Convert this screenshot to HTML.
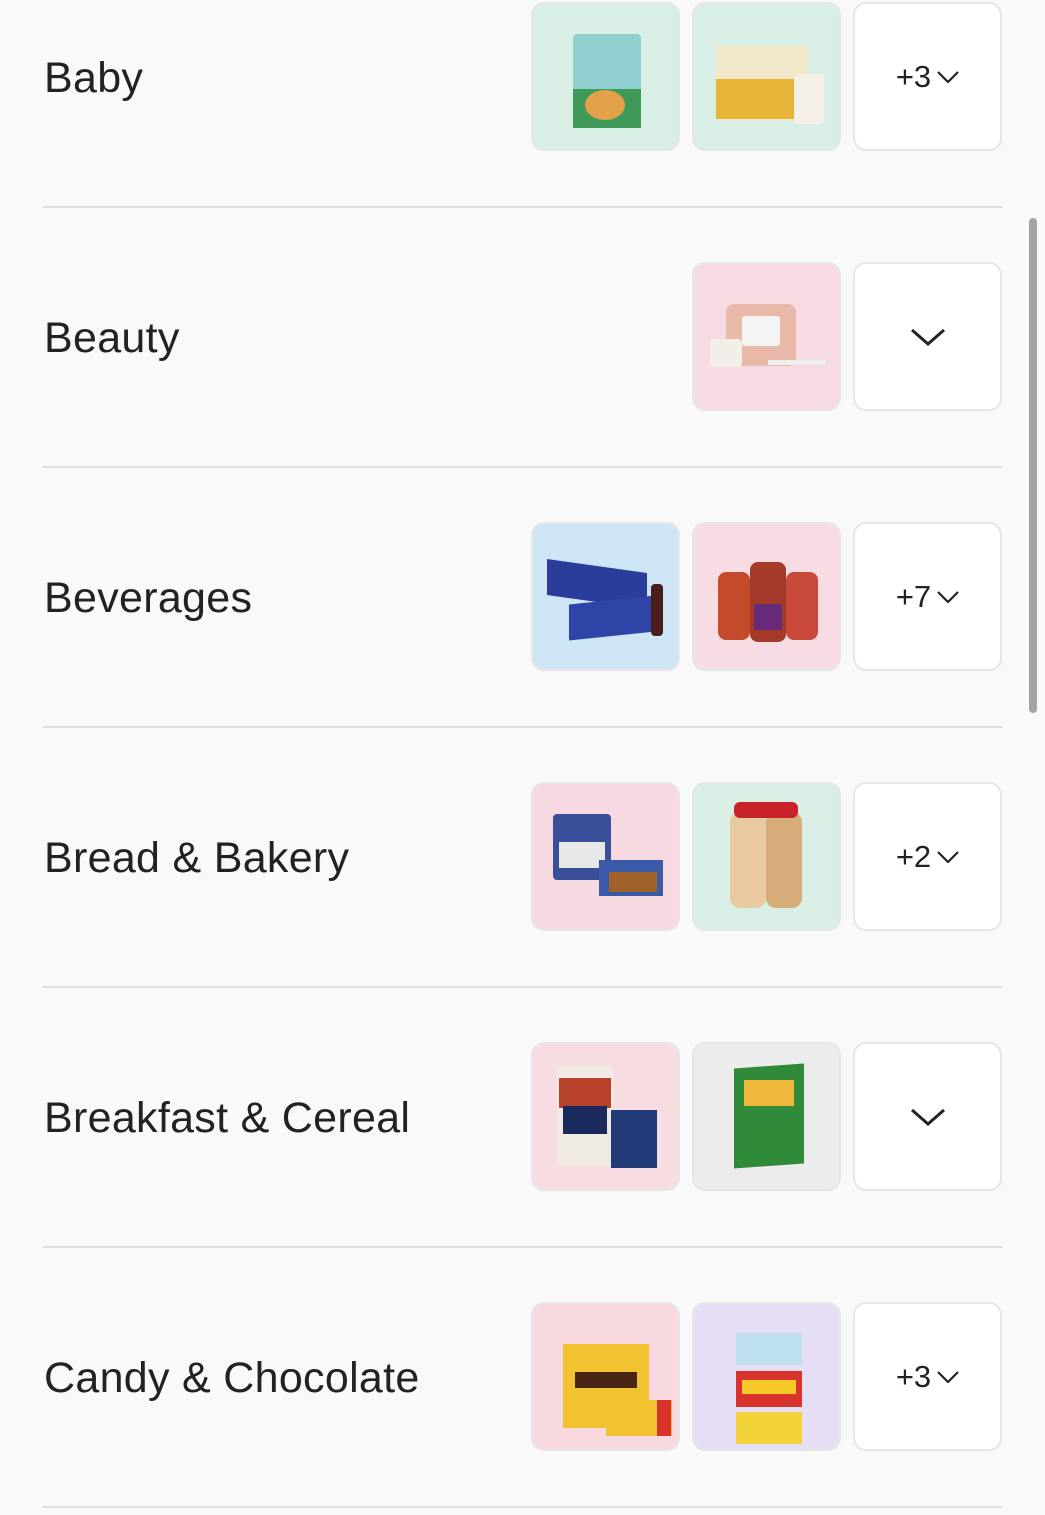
<!DOCTYPE html>
<html><head><meta charset="utf-8"><style>
*{margin:0;padding:0;box-sizing:border-box}
body{width:1045px;height:1515px;background:#f9f9f9;position:relative;overflow:hidden;font-family:"Liberation Sans",Arial,sans-serif;color:#222}
.lbl{position:absolute;left:44px;font-size:43px;line-height:50px;letter-spacing:0.3px}
.div{position:absolute;left:43px;width:959px;height:2px;background:#dedede}
.t{position:absolute;width:149px;height:149px;border-radius:13px;border:2px solid #e6e6e6;overflow:hidden}
.more{background:#fff;display:flex;align-items:center;justify-content:center;font-size:31px;color:#222}
.more svg{margin-left:6px}
.p{position:absolute}
.sb{position:absolute;left:1029px;top:218px;width:8px;height:495px;border-radius:4px;background:#a3a3a3}
</style></head><body>
<div class="sb"></div>

<!-- Row 1 Baby -->
<div class="lbl" style="top:53px">Baby</div>
<div class="t" style="left:531px;top:2px;background:#d9efe6">
 <div class="p" style="left:40px;top:30px;width:68px;height:94px;background:#8fcfd0;border-radius:4px"></div>
 <div class="p" style="left:40px;top:85px;width:68px;height:39px;background:#3f9a5a"></div>
 <div class="p" style="left:52px;top:86px;width:40px;height:30px;background:#e3a04a;border-radius:50%"></div>
</div>
<div class="t" style="left:692px;top:2px;background:#d9efe6">
 <div class="p" style="left:22px;top:42px;width:92px;height:74px;background:#f0e8c8"></div>
 <div class="p" style="left:22px;top:75px;width:92px;height:40px;background:#e8b437"></div>
 <div class="p" style="left:100px;top:70px;width:30px;height:50px;background:#f4f0e6;border-radius:4px"></div>
</div>
<div class="t more" style="left:853px;top:2px">+3<svg width="22" height="12" viewBox="0 0 22 12"><path d="M1 1L11 11L21 1" fill="none" stroke="#222" stroke-width="2.2"/></svg></div>
<div class="div" style="top:206px"></div>

<!-- Row 2 Beauty -->
<div class="lbl" style="top:313px">Beauty</div>
<div class="t" style="left:692px;top:262px;background:#f7dbe2">
 <div class="p" style="left:32px;top:40px;width:70px;height:62px;background:#e8b8a8;border-radius:8px"></div>
 <div class="p" style="left:48px;top:52px;width:38px;height:30px;background:#f4f4f4;border-radius:3px"></div>
 <div class="p" style="left:16px;top:75px;width:32px;height:28px;background:#f2efe8;border-radius:4px"></div>
 <div class="p" style="left:74px;top:96px;width:58px;height:5px;background:#eee"></div>
</div>
<div class="t more" style="left:853px;top:262px"><svg width="36" height="18" viewBox="0 0 36 18" style="margin:0"><path d="M2 2L18 16L34 2" fill="none" stroke="#222" stroke-width="3"/></svg></div>
<div class="div" style="top:466px"></div>

<!-- Row 3 Beverages -->
<div class="lbl" style="top:573px">Beverages</div>
<div class="t" style="left:531px;top:522px;background:#cde5f5">
 <div class="p" style="left:14px;top:42px;width:100px;height:36px;background:#2a3d9a;transform:skewY(8deg)"></div>
 <div class="p" style="left:36px;top:76px;width:86px;height:36px;background:#2e44a6;transform:skewY(-6deg)"></div>
 <div class="p" style="left:118px;top:60px;width:12px;height:52px;background:#4a1e1a;border-radius:4px"></div>
</div>
<div class="t" style="left:692px;top:522px;background:#f7dde3">
 <div class="p" style="left:24px;top:48px;width:32px;height:68px;background:#c44a2c;border-radius:8px"></div>
 <div class="p" style="left:92px;top:48px;width:32px;height:68px;background:#c94a3a;border-radius:8px"></div>
 <div class="p" style="left:56px;top:38px;width:36px;height:80px;background:#a33a2a;border-radius:8px"></div>
 <div class="p" style="left:60px;top:80px;width:28px;height:26px;background:#6a2a7a"></div>
</div>
<div class="t more" style="left:853px;top:522px">+7<svg width="22" height="12" viewBox="0 0 22 12"><path d="M1 1L11 11L21 1" fill="none" stroke="#222" stroke-width="2.2"/></svg></div>
<div class="div" style="top:726px"></div>

<!-- Row 4 Bread -->
<div class="lbl" style="top:833px">Bread &amp; Bakery</div>
<div class="t" style="left:531px;top:782px;background:#f7d9e2">
 <div class="p" style="left:20px;top:30px;width:58px;height:66px;background:#3a4f9a;border-radius:4px"></div>
 <div class="p" style="left:26px;top:58px;width:46px;height:26px;background:#e8e8e8"></div>
 <div class="p" style="left:66px;top:76px;width:64px;height:36px;background:#3a5aa8"></div>
 <div class="p" style="left:76px;top:88px;width:48px;height:20px;background:#a0602a"></div>
</div>
<div class="t" style="left:692px;top:782px;background:#d9efe6">
 <div class="p" style="left:36px;top:28px;width:36px;height:96px;background:#e9c9a0;border-radius:10px"></div>
 <div class="p" style="left:72px;top:28px;width:36px;height:96px;background:#d6ad7a;border-radius:10px"></div>
 <div class="p" style="left:40px;top:18px;width:64px;height:16px;background:#c8232a;border-radius:6px"></div>
</div>
<div class="t more" style="left:853px;top:782px">+2<svg width="22" height="12" viewBox="0 0 22 12"><path d="M1 1L11 11L21 1" fill="none" stroke="#222" stroke-width="2.2"/></svg></div>
<div class="div" style="top:986px"></div>

<!-- Row 5 Breakfast -->
<div class="lbl" style="top:1093px">Breakfast &amp; Cereal</div>
<div class="t" style="left:531px;top:1042px;background:#f7dde2">
 <div class="p" style="left:24px;top:22px;width:56px;height:100px;background:#f0ece4;border-radius:6px"></div>
 <div class="p" style="left:26px;top:34px;width:52px;height:30px;background:#b8412c"></div>
 <div class="p" style="left:30px;top:62px;width:44px;height:28px;background:#1a2a5c"></div>
 <div class="p" style="left:78px;top:66px;width:46px;height:58px;background:#233a78"></div>
</div>
<div class="t" style="left:692px;top:1042px;background:#ececec">
 <div class="p" style="left:40px;top:22px;width:70px;height:100px;background:#2f8a3a;transform:skewY(-4deg)"></div>
 <div class="p" style="left:50px;top:36px;width:50px;height:26px;background:#f0b83a"></div>
</div>
<div class="t more" style="left:853px;top:1042px"><svg width="36" height="18" viewBox="0 0 36 18" style="margin:0"><path d="M2 2L18 16L34 2" fill="none" stroke="#222" stroke-width="3"/></svg></div>
<div class="div" style="top:1246px"></div>

<!-- Row 6 Candy -->
<div class="lbl" style="top:1353px">Candy &amp; Chocolate</div>
<div class="t" style="left:531px;top:1302px;background:#f8d9e0">
 <div class="p" style="left:30px;top:40px;width:86px;height:84px;background:#f2c230"></div>
 <div class="p" style="left:42px;top:68px;width:62px;height:16px;background:#4a2414"></div>
 <div class="p" style="left:73px;top:96px;width:66px;height:36px;background:#f2c230"></div>
 <div class="p" style="left:124px;top:96px;width:14px;height:36px;background:#d8332c"></div>
</div>
<div class="t" style="left:692px;top:1302px;background:#e6def5">
 <div class="p" style="left:42px;top:29px;width:66px;height:32px;background:#bfe0ee"></div>
 <div class="p" style="left:42px;top:67px;width:66px;height:36px;background:#d8332c"></div>
 <div class="p" style="left:48px;top:76px;width:54px;height:14px;background:#f5c92a"></div>
 <div class="p" style="left:42px;top:108px;width:66px;height:32px;background:#f2d43a"></div>
</div>
<div class="t more" style="left:853px;top:1302px">+3<svg width="22" height="12" viewBox="0 0 22 12"><path d="M1 1L11 11L21 1" fill="none" stroke="#222" stroke-width="2.2"/></svg></div>
<div class="div" style="top:1506px"></div>
</body></html>
